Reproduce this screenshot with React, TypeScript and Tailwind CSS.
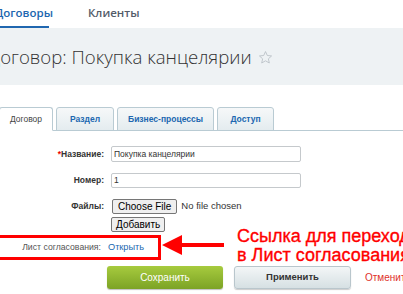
import { FC } from 'react';

const Star: FC = () => (
  <svg width="15" height="15" viewBox="0 0 24 24" className="ml-[6px] mt-[2px] shrink-0">
    <path
      d="M12 2.5l2.9 6.3 6.8.7-5.1 4.6 1.5 6.7L12 17.3l-6.1 3.5 1.5-6.7-5.1-4.6 6.8-.7z"
      fill="none"
      stroke="#b9c0c6"
      strokeWidth="1.4"
      strokeLinejoin="round"
    />
  </svg>
);

const tabBase =
  'h-[24px] shrink-0 flex items-center justify-center whitespace-nowrap border border-[#b9cbd3] rounded-t-[3px] text-[8.5px] -mb-px';
const tabIdle = ' ml-[3px] bg-gradient-to-b from-[#f6f8f9] to-[#e4ecef] text-[#2067b0] font-bold';

const App: FC = () => {
  return (
    <div className="w-[403px] h-[294px] overflow-hidden bg-white relative font-['Liberation_Sans',Arial,sans-serif]">
      {/* top menu */}
      <div className="h-[28px] flex font-['Open_Sans',sans-serif] text-[11.5px] font-semibold">
        <div className="-ml-[5px] w-[54px] shrink-0 h-[28px] pt-[4px] border-b-2 border-[#2067b0] text-[#2067b0] whitespace-nowrap">
          Договоры
        </div>
        <div className="ml-[39px] h-[28px] pt-[4px] text-[#535c69]">Клиенты</div>
      </div>

      {/* title band */}
      <div className="h-[57px] bg-[#eef2f4] flex items-center">
        <div className="-ml-[12px] flex items-center font-['Open_Sans',sans-serif] text-[18.6px] font-light text-[#333] whitespace-nowrap">
          Договор: Покупка канцелярии
          <Star />
        </div>
      </div>

      {/* tabs */}
      <div className="mt-[23px] flex items-end border-b border-[#b9cbd3] h-[23px]">
        <div className={tabBase + ' -ml-[1px] w-[54px] bg-white border-b-white text-[#444]'}>Договор</div>
        <div className={tabBase + tabIdle + ' w-[58px]'}>Раздел</div>
        <div className={tabBase + tabIdle + ' w-[97px]'}>Бизнес-процессы</div>
        <div className={tabBase + tabIdle + ' w-[57px]'}>Доступ</div>
      </div>

      {/* form */}
      <div className="pt-[15px] text-[8.5px]">
        <div className="flex items-center h-[16px]">
          <div className="w-[104px] shrink-0 text-right font-bold text-[#333]">
            <span className="text-[#e00]">*</span>Название:
          </div>
          <div className="ml-[7px] w-[190px] h-[16px] border border-[#c5c9cc] rounded-[2px] px-[2px] flex items-center text-[#333]">
            Покупка канцелярии
          </div>
        </div>
        <div className="flex items-center h-[16px] mt-[10px]">
          <div className="w-[104px] shrink-0 text-right font-bold text-[#333]">Номер:</div>
          <div className="ml-[7px] w-[190px] h-[15px] border border-[#c5c9cc] rounded-[2px] px-[2px] flex items-center text-[#333]">
            1
          </div>
        </div>
        <div className="flex items-start mt-[11px]">
          <div className="w-[104px] shrink-0 text-right font-bold text-[#333] pt-[1px]">Файлы:</div>
          <div className="ml-[8px] flex flex-col items-start">
            <div className="flex items-center h-[15px]">
              <div className="h-[15px] px-[5px] flex items-center border border-[#767676] rounded-[2px] bg-[#efefef] text-[10px] text-black">
                Choose File
              </div>
              <span className="ml-[4px] text-[9.5px] text-[#333]">No file chosen</span>
            </div>
            <div className="mt-[3px] -ml-px h-[15px] px-[4px] flex items-center border border-[#767676] rounded-[2px] bg-[#efefef] text-[10px] text-black">
              Добавить
            </div>
          </div>
        </div>

        {/* highlighted row */}
        <div className="mt-[3px] w-[161px] h-[25px] border-[3px] border-l-0 border-[#f00] flex items-center">
          <div className="w-[101px] shrink-0 text-right text-[#555] text-[8.7px]">Лист согласования:</div>
          <a href="#" className="ml-[7px] text-[9.2px] text-[#2067b0]">
            Открыть
          </a>
        </div>

        {/* buttons */}
        <div className="flex items-center mt-[6px]">
          <div className="ml-[107px] shrink-0 w-[116px] h-[23px] rounded-[3px] bg-gradient-to-b from-[#a7cb3e] to-[#7ca325] shadow-[0_1px_1px_rgba(0,0,0,0.25)] flex items-center justify-center text-white text-[10px]">
            Сохранить
          </div>
          <div className="ml-[11px] shrink-0 w-[117px] h-[23px] rounded-[3px] border border-[#b9c6cc] bg-gradient-to-b from-[#f3f6f7] to-[#d6e0e3] shadow-[0_1px_1px_rgba(0,0,0,0.2)] flex items-center justify-center text-[#333] text-[9.5px] font-bold">
            Применить
          </div>
          <div className="ml-[14px] shrink-0 text-[10px] text-[#e0322b] whitespace-nowrap">Отменить</div>
        </div>
      </div>

      {/* annotation arrow */}
      <svg className="absolute left-[162px] top-[234px]" width="62" height="22" viewBox="0 0 62 22">
        <polygon points="0,11 20,1 20,9 62,9 62,13 20,13 20,21" fill="#f00" />
      </svg>
      <div className="absolute left-[237px] top-[227px] text-[18px] leading-[19px] text-[#f00] whitespace-nowrap [-webkit-text-stroke:0.35px_#f00]">
        Ссылка для перехода
        <br />в Лист согласования
      </div>
    </div>
  );
};

export default App;
